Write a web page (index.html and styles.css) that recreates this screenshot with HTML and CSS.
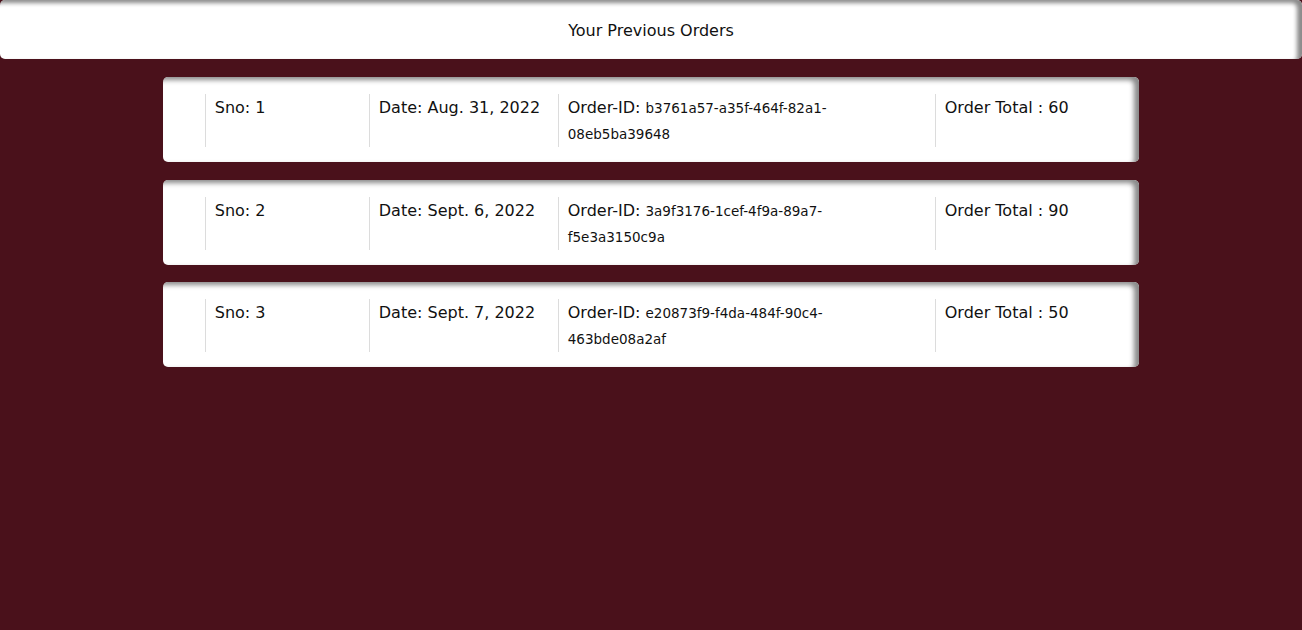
FILE: index.html
```html
<!DOCTYPE html>
<html lang="en">
<head>
<meta charset="utf-8">
<title>Your Previous Orders</title>
<link rel="stylesheet" href="styles.css">
</head>
<body>
  <header class="page-header">Your Previous Orders</header>
  <main class="orders">
    <div class="order-card">
      <div class="col col-sno">Sno: 1</div>
      <div class="col col-date">Date: Aug. 31, 2022</div>
      <div class="col col-id">Order-ID: <small>b3761a57-a35f-464f-82a1-<wbr>08eb5ba39648</small></div>
      <div class="col col-total">Order Total : 60</div>
    </div>
    <div class="order-card">
      <div class="col col-sno">Sno: 2</div>
      <div class="col col-date">Date: Sept. 6, 2022</div>
      <div class="col col-id">Order-ID: <small>3a9f3176-1cef-4f9a-89a7-<wbr>f5e3a3150c9a</small></div>
      <div class="col col-total">Order Total : 90</div>
    </div>
    <div class="order-card">
      <div class="col col-sno">Sno: 3</div>
      <div class="col col-date">Date: Sept. 7, 2022</div>
      <div class="col col-id">Order-ID: <small>e20873f9-f4da-484f-90c4-<wbr>463bde08a2af</small></div>
      <div class="col col-total">Order Total : 50</div>
    </div>
  </main>
</body>
</html>
```

FILE: styles.css
```css
html, body {
  margin: 0;
  padding: 0;
}
body {
  background: #4a111b;
  font-family: "DejaVu Sans", "Open Sans", sans-serif;
  color: #111;
  min-height: 630px;
}
.page-header {
  background: #fff;
  height: 59px;
  box-sizing: border-box;
  padding-top: 2px;
  border-radius: 5px;
  display: flex;
  align-items: center;
  justify-content: center;
  font-size: 16px;
  box-shadow: inset -5px 3px 4px #8a8a8a;
}
.orders {
  width: 75%;
  margin: 18px auto 0;
  display: flex;
  flex-direction: column;
  gap: 17.5px;
}
.order-card {
  background: #fff;
  border-radius: 5px;
  box-shadow: inset -5px 3px 5px #8a8a8a;
  padding: 17px 0 15px 42px;
  display: grid;
  grid-template-columns: 164px 189px 377px 1fr;
  font-size: 16px;
  line-height: 26px;
}
.col {
  border-left: 1px solid #dcdcdc;
  padding: 1px 0 0 9px;
  min-height: 52px;
}
.col-id {
  padding-right: 20px;
}
.col small {
  font-size: 13.5px;
}
```
